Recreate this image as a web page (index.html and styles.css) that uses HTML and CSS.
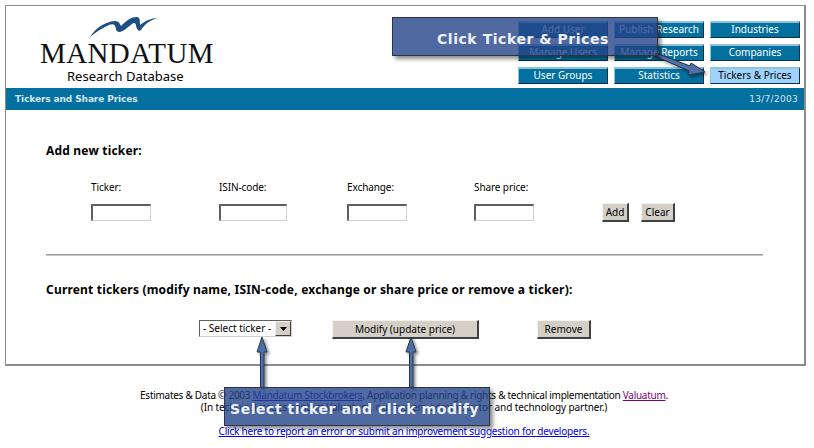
FILE: index.html
```html
<!DOCTYPE html>
<html lang="en">
<head>
<meta charset="utf-8">
<title>Tickers and Share Prices</title>
<link rel="stylesheet" href="styles.css">
</head>
<body>
<div class="frame">
  <header class="head">
    <div class="brand">
      <svg class="bird" width="70" height="24" viewBox="0 0 70 24"><path d="M0 21C6 12 14 6 25 5C29 5 30 8 31 10C35 6 40 1 47 1C50 1 50 5 50 9C55 5 61 2 68 2C60 4 55 8 51 14C49 16 47 14 46 10C46 7 44 6 42 8C38 11 33 16 29 16C26 16 26 12 25 10C24 8 22 8 19 9C12 12 6 16 0 21Z" fill="#1b4f86"/></svg>
      <div class="wordmark">Mandatum</div>
      <div class="dbname">Research Database</div>
    </div>
    <nav class="nav">
      <a class="navbtn">Add User</a><a class="navbtn">Publish Research</a><a class="navbtn">Industries</a>
      <a class="navbtn">Manage Users</a><a class="navbtn">Manage Reports</a><a class="navbtn">Companies</a>
      <a class="navbtn">User Groups</a><a class="navbtn">Statistics</a><a class="navbtn active">Tickers &amp; Prices</a>
    </nav>
  </header>
  <div class="band"><span class="band-title">Tickers and Share Prices</span><span class="band-date">13/7/2003</span></div>
  <main class="content">
    <h2 class="title first">Add new ticker:</h2>
    <div class="addrow">
      <label class="field f1">Ticker:<input class="inp w60"></label>
      <label class="field f2">ISIN-code:<input class="inp w68"></label>
      <label class="field f3">Exchange:<input class="inp w60"></label>
      <label class="field f4">Share price:<input class="inp w60"></label>
      <div class="addbtns"><button class="btn b-add">Add</button><button class="btn b-clear">Clear</button></div>
    </div>
    <div class="rule"></div>
    <h2 class="title second">Current tickers (modify name, ISIN-code, exchange or share price or remove a ticker):</h2>
    <div class="actions">
      <div class="select"><span class="select-text">- Select ticker -</span><span class="select-arrow"><svg width="7" height="4" viewBox="0 0 7 4"><path d="M0 0H7L3.5 4Z" fill="#000"/></svg></span></div>
      <button class="btn b-modify">Modify (update price)</button>
      <button class="btn b-remove">Remove</button>
    </div>
  </main>
</div>
<footer class="foot">
  <p class="foot-line tight">Estimates &amp; Data © 2003 <a class="lnk" href="#">Mandatum Stockbrokers</a>, Application planning &amp; rights &amp; technical implementation <a class="lnk visited" href="#">Valuatum</a>.</p>
  <p class="foot-line">(In technical issues contact Valuatum, our system administrator and technology partner.)</p>
  <p class="foot-line report"><a class="lnk" href="#">Click here to report an error or submit an improvement suggestion for developers.</a></p>
</footer>

<svg class="arrows" width="814" height="448" viewBox="0 0 814 448">
  <defs><filter id="sh" x="-30%" y="-30%" width="160%" height="160%"><feDropShadow dx="2" dy="2" stdDeviation="1.5" flood-color="#000" flood-opacity=".45"/></filter></defs>
  <g filter="url(#sh)" fill="#4f6fa6" stroke="#28344f" stroke-width="1">
    <path d="M656 53L690 66L691 63L705 72L688 75L689 71L655 56Z"/>
    <path d="M260.500 388V352H257L262 337L267 352H264V388Z"/>
    <path d="M409.500 388V352H406L411 337L416 352H413V388Z"/>
  </g>
</svg>
<div class="callout c-top">Click Ticker &amp; Prices</div>
<div class="callout c-bottom">Select ticker and click modify</div>
</body>
</html>
```
FILE: styles.css
```css
* { box-sizing: border-box; }
html, body { margin: 0; padding: 0; }
body { width: 814px; height: 448px; overflow: hidden; background: #fff; color: #000; font-family: "Noto Sans", "DejaVu Sans", sans-serif; font-size: 10px; position: relative; }
.frame { margin: 5px 0 0 5px; width: 801px; height: 361px; border: 1px solid #8c8c8c; border-right-width: 2px; border-bottom-width: 2px; }
.head { height: 82px; display: flex; justify-content: space-between; }
.brand { width: 240px; display: flex; flex-direction: column; align-items: flex-start; padding: 10px 0 0 34px; }
.bird { display: block; margin: 0 0 0 50px; }
.wordmark { font-family: "Liberation Serif", serif; font-size: 29px; line-height: 24px; letter-spacing: .4px; text-transform: uppercase; color: #111; margin: 1px 0 0 0; }
.dbname { font-size: 13px; line-height: 16px; margin: 3px 0 0 27px; white-space: nowrap; }
.nav { display: grid; grid-template-columns: repeat(3, 90px); grid-auto-rows: 17px; column-gap: 6px; row-gap: 6px; padding: 15px 4px 0 0; }
.navbtn { display: flex; align-items: center; justify-content: center; background: #04709f; color: #fff; font-size: 10px; border: 1px solid; border-color: #8fc4da #03324a #03324a #8fc4da; border-top-width: 2px; padding-bottom: 3px; }
.navbtn.active { background: #9fd3fb; color: #000; }
.band { height: 22px; background: #04709f; display: flex; align-items: center; justify-content: space-between; padding: 0 6px 0 9px; color: #d6e6ee; }
.band-title { font-family: "DejaVu Sans", sans-serif; font-size: 9px; font-weight: bold; letter-spacing: -.1px; }
.band-date { font-family: "DejaVu Sans", sans-serif; font-size: 9px; letter-spacing: .3px; }
.content { padding: 33px 0 0 40px; }
.title { margin: 0; font-size: 12px; line-height: 16px; font-weight: bold; letter-spacing: .19px; white-space: nowrap; }
.addrow { display: flex; align-items: flex-end; margin: 21px 0 0 45px; }
.field { display: flex; flex-direction: column; gap: 10px; line-height: 14px; letter-spacing: -.1px; }
.f1, .f2 { width: 128px; }
.f3 { width: 127px; }
.f4 { width: 128px; }
.inp { height: 17px; padding: 0; display: block; background: #fff; border: 1px solid; border-color: #5f5f5f #d4d0c8 #d4d0c8 #5f5f5f; border-top-width: 2px; border-left-width: 2px; outline: 0; }
.w60 { width: 60px; }
.w68 { width: 68px; }
.addbtns { display: flex; gap: 12px; margin-bottom: -1px; }
.btn { background: #d4d0c8; color: #000; font: inherit; padding: 0 0 1px; border: 1px solid; border-color: #f4f2ee #404040 #404040 #f4f2ee; border-right-width: 2px; border-bottom-width: 2px; height: 19px; }
.b-add { width: 27px; }
.b-clear { width: 34px; }
.rule { height: 2px; background: #9a9a94; width: 717px; margin: 33px 0 0; border-bottom: 1px solid #c8c8c4; }
.second { margin-top: 26px; }
.actions { display: flex; align-items: flex-start; margin: 22px 0 0 153px; }
.select { width: 93px; height: 17px; border: 1px solid; border-color: #5f5f5f #d4d0c8 #d4d0c8 #5f5f5f; display: flex; align-items: center; justify-content: space-between; }
.select-text { padding: 0 0 1px 3px; white-space: nowrap; }
.select-arrow { width: 16px; height: 15px; background: #d4d0c8; display: flex; align-items: center; justify-content: center; border: 1px solid; border-color: #f4f2ee #404040 #404040 #f4f2ee; }
.b-modify { width: 147px; margin-left: 40px; }
.b-remove { width: 54px; margin-left: 58px; }
.foot { text-align: center; width: 808px; margin-top: 23px; }
.foot-line { margin: 0; line-height: 12px; letter-spacing: -.1px; white-space: nowrap; }
.foot-line.tight { letter-spacing: -.28px; }
.report { margin-top: 12px; letter-spacing: -.2px; }
.lnk { color: #00e; text-decoration: underline; }
.lnk.visited { color: #7a007a; }
.arrows { position: absolute; left: 0; top: 0; pointer-events: none; }
.callout { position: absolute; background: rgba(36, 67, 136, .8); border: 1px solid #2e3540; box-shadow: 3px 3px 4px rgba(0,0,0,.45); color: #eef1f8; font-family: "DejaVu Sans", sans-serif; font-weight: bold; font-size: 14px; letter-spacing: .55px; white-space: nowrap; display: flex; align-items: center; padding-top: 5px; }
.c-top { left: 392px; top: 17px; width: 266px; height: 39px; padding-left: 44px; }
.c-bottom { left: 224px; top: 387px; width: 266px; height: 39px; padding-left: 5px; }
```
